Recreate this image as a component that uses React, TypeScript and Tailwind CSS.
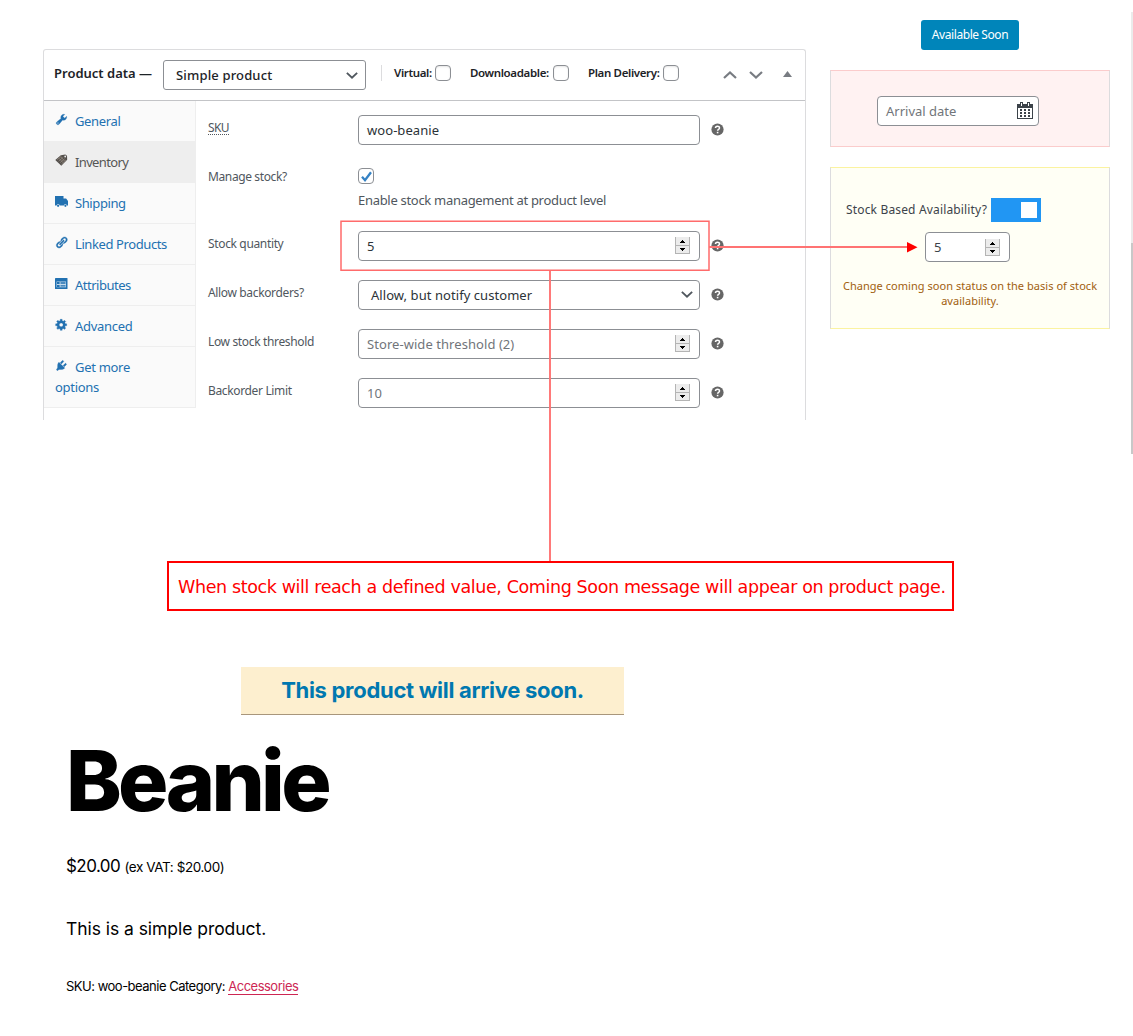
import React from "react";

const dash = {
  tools:
    "M16.68 9.77c-1.34 1.34-3.3 1.67-4.95.99l-5.41 6.52c-.99.99-2.59.99-3.58 0s-.99-2.59 0-3.57l6.52-5.42c-.68-1.65-.35-3.61.99-4.95 1.28-1.28 3.12-1.62 4.72-1.06l-2.89 2.89 2.82 2.82 2.86-2.87c.53 1.58.18 3.39-1.08 4.65zM3.81 16.21c.4.39 1.04.39 1.43 0 .4-.4.4-1.04 0-1.43-.39-.4-1.03-.4-1.43 0-.39.39-.39 1.03 0 1.43z",
  links:
    "M17.74 2.76c1.68 1.69 1.68 4.41 0 6.1l-1.53 1.52c-1.12 1.12-2.7 1.47-4.14 1.09l2.62-2.61.76-.77.76-.76c.84-.84.84-2.2 0-3.04-.84-.85-2.2-.85-3.04 0l-.77.76-3.38 3.38c-.37-1.44-.02-3.02 1.1-4.14l1.52-1.53c1.69-1.68 4.42-1.68 6.1 0zM8.59 13.43l5.34-5.34c.42-.42.42-1.1 0-1.52-.44-.43-1.13-.39-1.53 0l-5.33 5.34c-.42.42-.42 1.1 0 1.52.44.43 1.13.39 1.52 0zm-.76 2.29l4.14-4.15c.38 1.44.03 3.02-1.09 4.14l-1.52 1.53c-1.69 1.68-4.41 1.68-6.1 0-1.68-1.68-1.68-4.42 0-6.1l1.53-1.52c1.12-1.12 2.7-1.47 4.14-1.1l-4.14 4.15c-.85.84-.85 2.2 0 3.05.84.84 2.2.84 3.04 0z",
  gear: "M18 12h-2.18c-.17.7-.44 1.35-.81 1.93l1.54 1.54-2.1 2.1-1.54-1.54c-.58.36-1.23.63-1.91.79V19H8v-2.18c-.68-.16-1.33-.43-1.91-.79l-1.54 1.54-2.12-2.12 1.54-1.54c-.36-.58-.63-1.23-.79-1.91H1V9.03h2.17c.16-.7.44-1.35.8-1.94L2.43 5.55l2.1-2.1 1.54 1.54c.58-.37 1.24-.64 1.93-.81V2h3v2.18c.68.16 1.33.43 1.91.79l1.54-1.54 2.12 2.12-1.54 1.54c.36.59.64 1.24.8 1.94H18V12zm-8.5 1.5c1.66 0 3-1.34 3-3s-1.34-3-3-3-3 1.34-3 3 1.34 3 3 3z",
  plug: "M13.11 4.36L9.87 7.6 8 5.73l3.24-3.24c.35-.34 1.05-.2 1.56.32.52.51.66 1.21.31 1.55zm-8 1.77l.91-1.12 9.01 9.01-1.19.84c-.71.71-2.63 1.16-3.82 1.16H6.14L4.9 17.26c-.59.59-1.54.59-2.12 0-.59-.58-.59-1.53 0-2.12l1.24-1.24v-3.88c0-1.13.4-3.19 1.09-3.89zm7.26 3.97l3.24-3.24c.34-.35 1.04-.21 1.55.31.52.51.66 1.21.31 1.55l-3.24 3.25z",
};

function Dash({ d }: { d: string }) {
  return (
    <svg className="size-[13px]" viewBox="0 0 20 20" fill="currentColor" stroke="currentColor" strokeWidth=".5">
      <path d={d} />
    </svg>
  );
}

function TagIcon() {
  return (
    <svg className="size-[13px]" viewBox="0 0 13 13">
      <path d="M.3 6 5.800 1.200 10.300.400 12 1.800 12.200 5.800 6.300 11.800Z" fill="#54504c" />
      <path
        d="M2.200 5.800 6.400 2.200M3.600 7.300 8.200 3.300M5 8.700 9.800 4.600M6.300 10.200 11 5.800M4 4.300 8 8.600M5.800 2.900 9.700 7.200"
        stroke="#a2978c"
        strokeWidth=".6"
      />
      <circle cx="10.200" cy="2.500" r=".9" fill="#eee" />
    </svg>
  );
}

function TruckIcon() {
  return (
    <svg className="h-[13px] w-[14px]" viewBox="0 0 14 13" fill="currentColor">
      <path d="M0 1h8.5v2.4h2.6L13 6v4.4h-1.1a1.6 1.6 0 0 0-3.1 0H4.7a1.6 1.6 0 0 0-3.1 0H0Z" />
      <circle cx="3.1" cy="10.8" r="1.1" />
      <circle cx="10.4" cy="10.8" r="1.1" />
    </svg>
  );
}

function ListIcon() {
  return (
    <svg className="size-[13px]" viewBox="0 0 13 13">
      <rect x="0" y="1" width="12.5" height="11" rx=".6" fill="#2271b1" />
      <path d="M1.500 4.500h9.500v5.800h-9.500z" fill="#c5dbec" />
      <path d="M2 5h2.600v2H2zM2 8h2.600v2H2zM5.500 5.300h5v1.400h-5zM5.500 8.200h5v1.400h-5z" fill="#2271b1" />
    </svg>
  );
}

const tabs = [
  { label: "General", icon: <Dash d={dash.tools} />, track: "tracking-[-0.35px]" },
  { label: "Inventory", icon: <TagIcon />, track: "tracking-[-0.65px]", active: true },
  { label: "Shipping", icon: <TruckIcon />, track: "tracking-[-0.4px]" },
  { label: "Linked Products", icon: <Dash d={dash.links} />, track: "tracking-[-0.4px]" },
  { label: "Attributes", icon: <ListIcon />, track: "tracking-[-0.5px]" },
  { label: "Advanced", icon: <Dash d={dash.gear} />, track: "tracking-[-0.3px]" },
];

function Help({ cls = "" }: { cls?: string }) {
  return (
    <svg className={"ml-[11px] size-[13px] " + cls} viewBox="0 0 13 13">
      <circle cx="6.500" cy="6.500" r="6.100" fill="#666" />
      <path d="M4.500 5.100c0-2.500 4-2.400 4-.2 0 1.500-1.900 1.400-1.900 2.900" fill="none" stroke="#fff" strokeWidth="1.500" />
      <rect x="5.800" y="8.800" width="1.600" height="1.500" fill="#fff" />
    </svg>
  );
}

function Spinner() {
  return (
    <svg className="h-[17px] w-[15px]" viewBox="0 0 15 17" shapeRendering="crispEdges">
      <rect width="15" height="17" fill="#ececec" />
      <path d="M0 0h1v17H0zM14 0h1v17h-1zM0 8h15v1H0zM0 16h15v1H0z" fill="#b4b4b4" />
      <path d="M7 3h1v1h1v1h1v1H5V5h1V4h1zM5 11h5v1H9v1H8v1H7v-1H6v-1H5z" fill="#000" />
    </svg>
  );
}

function Chevron({ up = false, cls = "" }: { up?: boolean; cls?: string }) {
  return (
    <svg className={cls} viewBox="0 0 14 8" fill="none" stroke="currentColor" strokeWidth="2.200">
      <path d={up ? "M1 7 7 1.500 13 7" : "M1 1 7 6.500 13 1"} />
    </svg>
  );
}

function Field({ children, muted = false, right }: { children: React.ReactNode; muted?: boolean; right?: React.ReactNode }) {
  return (
    <div
      className={
        "flex h-[30px] w-[342px] items-center justify-between rounded-[4px] border border-[#8c8f94] bg-white pl-2 pr-[9px] text-[13px] tracking-[0.06px] " +
        (muted ? "text-[#71757a]" : "text-[#2c3338]")
      }
    >
      <span className="pt-[2px]">{children}</span>
      {right}
    </div>
  );
}

function Row({ label, children }: { label: string; children: React.ReactNode }) {
  return (
    <div className="flex h-[49px] items-center">
      <div className="w-[150px] pb-[4px] text-[12px] leading-5 tracking-[-0.35px] text-[#50575e]">{label}</div>
      {children}
      <Help />
    </div>
  );
}

function Box({ label, cls }: { label: string; cls: string }) {
  return (
    <div className={"flex items-center " + cls}>
      <span className="w-0 grow whitespace-nowrap">{label}</span>
      <span className="h-4 w-4 shrink-0 rounded-[4px] border border-[#8c8f94] bg-white shadow-[inset_0_1px_2px_rgba(0,0,0,.1)]" />
    </div>
  );
}

function ProductData() {
  return (
    <section className="mt-[49px] h-[371px] w-[763px] shrink-0 rounded-t-[3px] border border-b-0 border-[#dcdcde] text-[#1d2327]">
      <header className="flex h-[51px] items-center border-b border-[#c3c4c7] pl-[10px]">
        <h2 className="w-[109px] whitespace-nowrap pb-[2px] text-[13px] font-semibold">Product data —</h2>
        <div className="flex h-[30px] w-[203px] items-center justify-between rounded-[3px] border border-[#8c8f94] pl-3 pr-[7px] text-[13px] font-medium">
          <span className="pt-[2px] tracking-[0.15px]">Simple product</span>
          <Chevron cls="h-[7px] w-[12px] text-[#50575e]" />
        </div>
        <div className="ml-[15px] mb-1 h-4 w-px bg-[#dcdcde]" />
        <div className="mb-[5px] flex text-[11.500px] font-semibold tracking-[-0.36px]">
          <Box label="Virtual:" cls="ml-3 w-[57px]" />
          <Box label="Downloadable:" cls="ml-[19px] w-[99px]" />
          <Box label="Plan Delivery:" cls="ml-[19px] w-[91px]" />
        </div>
        <Chevron up cls="ml-[44px] h-[8px] w-[14px] text-[#787c82]" />
        <Chevron cls="ml-[12px] h-[8px] w-[14px] text-[#787c82]" />
        <svg className="mb-[2px] ml-[20px] h-[6px] w-[9px]" viewBox="0 0 9 6">
          <path d="M4.500 0 9 6H0z" fill="#787c82" />
        </svg>
      </header>
      <div className="flex">
        <nav className="h-[307px] w-[152px] shrink-0 border-b border-r border-[#eee] bg-[#fafafa] text-[13px] text-[#2271b1]">
          {tabs.map((t) => (
            <div
              key={t.label}
              className={"flex h-[41px] items-center border-b border-[#eee] pl-[11px] " + (t.active ? "bg-[#eee] text-[#555]" : "")}
            >
              <span className="mb-[3px] w-5">{t.icon}</span>
              <span className={"whitespace-nowrap pt-[2px] " + t.track}>{t.label}</span>
            </div>
          ))}
          <div className="pl-[11px] pt-[10px] leading-5 tracking-[-0.3px]">
            <div className="flex items-center">
              <span className="mb-[3px] w-5">
                <Dash d={dash.plug} />
              </span>
              Get more
            </div>
            <div>options</div>
          </div>
        </nav>
        <div className="pl-3">
          <div className="flex h-[58px] items-center">
            <div className="w-[150px] pb-[4px] text-[12px] leading-5 tracking-[-0.65px] text-[#50575e]">
              <span className="inline-block border-b border-dotted border-[#50575e] leading-3">SKU</span>
            </div>
            <Field>woo-beanie</Field>
            <Help cls="mb-[2px]" />
          </div>
          <div className="flex h-[62px] pt-[8px]">
            <div className="w-[150px] text-[12px] leading-5 tracking-[-0.38px] text-[#50575e]">Manage stock?</div>
            <div>
              <div className="mt-[1px] flex h-4 w-4 items-center justify-center rounded-[4px] border border-[#8c8f94]">
                <svg className="size-[13px]" viewBox="0 0 13 13">
                  <path d="m2 6.800 3 3.400 6-8" fill="none" stroke="#3582c4" strokeWidth="2.300" />
                </svg>
              </div>
              <p className="mt-[6px] text-[13px] leading-5 tracking-[-0.3px] text-[#50575e]">Enable stock management at product level</p>
            </div>
          </div>
          <Row label="Stock quantity">
            <Field right={<Spinner />}>5</Field>
          </Row>
          <Row label="Allow backorders?">
            <Field right={<Chevron cls="mr-[-3px] h-[7px] w-[12px] text-[#50575e]" />}>
              <span className="pl-1">Allow, but notify customer</span>
            </Field>
          </Row>
          <Row label="Low stock threshold">
            <Field muted right={<Spinner />}>Store-wide threshold (2)</Field>
          </Row>
          <Row label="Backorder Limit">
            <Field muted right={<Spinner />}>10</Field>
          </Row>
        </div>
      </div>
    </section>
  );
}

function CalendarIcon() {
  return (
    <svg className="h-[18px] w-4" viewBox="0 0 16 18" shapeRendering="crispEdges">
      <path d="M0 2h16v15H0z" fill="#3c434a" />
      <path d="M3 0h3v4H3zM10 0h3v4h-3z" fill="#3c434a" />
      <path d="M4 1h1v3H4zM11 1h1v3h-1z" fill="#fff" />
      <path d="M1 6h14v10H1z" fill="#fff" />
      <path
        d="M3 7h2v2H3zM7 7h2v2H7zM11 7h2v2h-2zM3 10h2v2H3zM7 10h2v2H7zM11 10h2v2h-2zM3 13h2v2H3zM7 13h2v2H7zM11 13h2v2h-2z"
        fill="#3c434a"
      />
    </svg>
  );
}

function Availability() {
  return (
    <aside className="ml-6 flex w-[280px] shrink-0 flex-col pt-5 text-[#3c434a]">
      <button className="ml-[91px] h-[30px] w-[98px] whitespace-nowrap rounded-[3px] bg-[#0085ba] text-[12px] tracking-[-0.43px] text-white">
        Available Soon
      </button>
      <div className="mt-5 h-[77px] border border-x-[#dcdcde] border-y-[#fbcccc] bg-[#fff2f2] pl-[46px] pt-[25px]">
        <div className="flex h-[30px] w-[162px] items-center justify-between rounded-[4px] border border-[#8c8f94] bg-white pl-2 pr-[5px] text-[13px] text-[#71757a]">
          <span className="pt-[2px]">Arrival date</span>
          <CalendarIcon />
        </div>
      </div>
      <div className="mt-5 h-[162px] border border-x-[#dcdcde] border-y-[#fbf3a0] bg-[#fffff5] pt-[30px]">
        <div className="ml-[15px] flex items-center">
          <span className="w-[145px] whitespace-nowrap text-[12px] tracking-[0.160px]">Stock Based Availability?</span>
          <span className="flex h-6 w-[50px] items-center justify-end bg-[#2196f3] pr-1">
            <span className="size-4 bg-white" />
          </span>
        </div>
        <div className="ml-[94px] mt-[10px] flex h-[30px] w-[85px] items-center justify-between rounded-[4px] border border-[#8c8f94] bg-white pl-2 pr-[9px] text-[13px]">
          <span className="pt-[2px]">5</span>
          <Spinner />
        </div>
        <p className="mt-[16px] whitespace-nowrap text-center text-[11px] leading-[15px] tracking-[0.04px] text-[#a1600f]">
          Change coming soon status on the basis of stock
          <br />
          availability.
        </p>
      </div>
    </aside>
  );
}

function Annotations() {
  return (
    <svg className="pointer-events-none absolute left-0 top-0 h-[620px] w-[1133px]" viewBox="0 0 1133 620" fill="none">
      <path d="M341 221.300H709V270.200H341Z" stroke="#ff6b6b" strokeWidth="1.500" />
      <path d="M709 247H908M550 271V561" stroke="#ff7373" strokeWidth="1.900" />
      <path d="M907 242 917.500 247.300 907 252.600Z" fill="#f00" />
    </svg>
  );
}

export default function App() {
  return (
    <main className="relative h-[1036px] w-[1133px] overflow-hidden bg-white font-['Noto_Sans',sans-serif]">
      <div className="flex h-[561px] pl-[43px]">
        <ProductData />
        <Availability />
        <div className="ml-[21px] mt-3 h-[442px] w-[2px] bg-[#ebebeb] pt-[231px]">
          <div className="h-[211px] bg-[#c8c8c8]" />
        </div>
      </div>
      <div className="ml-[167px] flex h-[50px] w-[787px] items-center whitespace-nowrap border-2 border-[#f00] pl-[9px] pt-[3px] font-['DejaVu_Sans',sans-serif] text-[17.500px] tracking-[-0.38px] text-[#f00]">
        When stock will reach a defined value, Coming Soon message will appear on product page.
      </div>
      <section className="font-['Inter',sans-serif] text-black">
        <div className="ml-[241px] mt-[56px] h-12 w-[383px] whitespace-nowrap border-b border-[#a8967c] bg-[#fdefcf] text-center text-[22px] font-bold leading-[47px] tracking-[-0.3px] text-[#0078b0]">
          This product will arrive soon.
        </div>
        <div className="pl-[66px]">
          <h1 className="mt-[24px] text-[84px] font-extrabold leading-[84px] tracking-[-3.700px]">Beanie</h1>
          <p className="mt-[33px] text-[17px] leading-5 tracking-[-0.55px]">
            $20.00 <span className="text-[13.500px] tracking-[-0.42px]">(ex VAT: $20.00)</span>
          </p>
          <p className="mt-[42px] text-[17.500px] leading-5 tracking-[-0.05px]">This is a simple product.</p>
          <p className="mt-[37px] text-[13px] leading-5 tracking-[-0.500px]">
            SKU: woo-beanie Category: <a className="border-b border-[#cd2653] text-[#cd2653]">Accessories</a>
          </p>
        </div>
      </section>
      <Annotations />
    </main>
  );
}
